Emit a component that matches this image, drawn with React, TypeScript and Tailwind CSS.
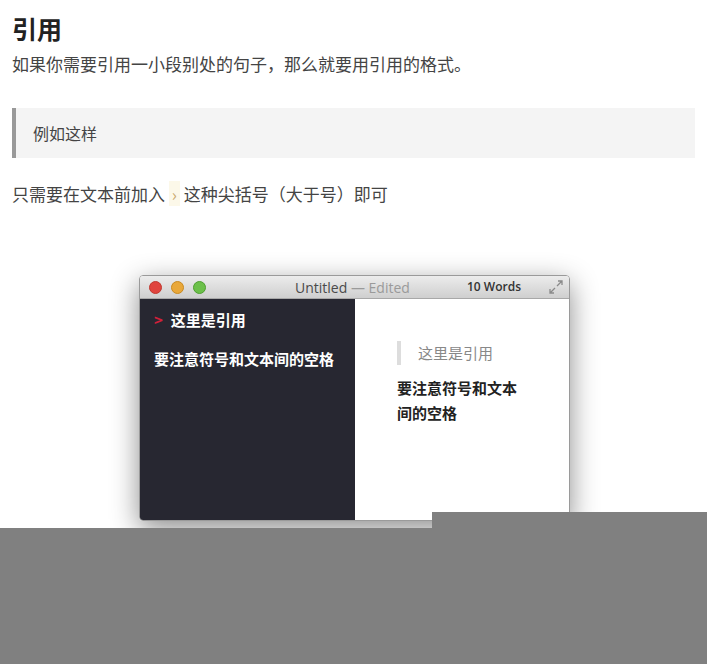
const cjk = { fontFamily: '"Noto Sans CJK SC", "Noto Sans", sans-serif' };

function MacWindow() {
  return (
    <div className="w-[431px] h-[246px] rounded-[4px] overflow-hidden flex flex-col shadow-[0_8px_28px_rgba(0,0,0,0.45)] border border-[#9a9a9a]">
      <div className="h-[23px] bg-gradient-to-b from-[#ececec] to-[#cfcfcf] border-b border-[#a8a8a8] flex items-center px-[9px] relative">
        <div className="flex gap-[9px]">
          <span className="w-[13px] h-[13px] rounded-full bg-[#e0443e] border border-[#c0392f]" />
          <span className="w-[13px] h-[13px] rounded-full bg-[#e9a83a] border border-[#c98a20]" />
          <span className="w-[13px] h-[13px] rounded-full bg-[#6cc04a] border border-[#4e9f30]" />
        </div>
        <div className="absolute left-[155px] text-[14px] text-[#4a4a4a]" style={{ fontFamily: '"Open Sans", sans-serif' }}>
          Untitled <span className="text-[#9a9a9a]">— Edited</span>
        </div>
        <div className="absolute left-[327px] text-[12px] text-[#333] font-semibold" style={{ fontFamily: '"Open Sans", sans-serif' }}>
          10 Words
        </div>
        <svg className="absolute right-[6px] w-[14px] h-[14px]" viewBox="0 0 14 14" fill="none" stroke="#8a8a8a" strokeWidth="1.3">
          <path d="M8 6l5-5M9 1h4v4M6 8l-5 5M1 9v4h4" />
        </svg>
      </div>
      <div className="flex flex-1">
        <div className="w-[215px] bg-[#272731] text-white font-bold text-[15px] px-[14px] pt-[10px]" style={cjk}>
          <div className="flex items-center gap-[8px]"><span className="text-[#d0203a]">&gt;</span>这里是引用</div>
          <div className="mt-[16px]">要注意符号和文本间的空格</div>
        </div>
        <div className="flex-1 bg-white pl-[42px] pt-[42px] text-[15px]" style={cjk}>
          <div className="border-l-[4px] border-[#ddd] pl-[17px] text-[#888] leading-[24px]">这里是引用</div>
          <div className="mt-[10px] text-[#222] font-semibold w-[125px] leading-[25px]">要注意符号和文本间的空格</div>
        </div>
      </div>
    </div>
  );
}

export default function App() {
  return (
    <div className="w-[707px] h-[664px] bg-white flex flex-col relative overflow-hidden" style={cjk}>
      <div className="h-[528px] px-[12px] pt-[10px] text-[#333]">
        <h1 className="text-[25px] font-bold leading-[36px] text-[#222]">引用</h1>
        <p className="mt-[4px] text-[17px] leading-[28px] text-[#444]">如果你需要引用一小段别处的句子，那么就要用引用的格式。</p>
        <div className="mt-[30px] h-[50px] bg-[#f4f4f4] border-l-[4px] border-[#999] flex items-center pl-[17px] text-[16px] text-[#444]">
          例如这样
        </div>
        <p className="mt-[22px] text-[17px] leading-[28px] text-[#444]">
          只需要在文本前加入 <span className="bg-[#fcf8e9] text-[#c9a86b] px-[3px]">›</span> 这种尖括号（大于号）即可
        </p>
        <div className="mt-[67px] ml-[127px]">
          <MacWindow />
        </div>
      </div>
      <div className="flex-1 bg-[#808080]" />
      <div className="absolute left-[432px] top-[512px] w-[275px] h-[16px] bg-[#808080]" />
    </div>
  );
}
